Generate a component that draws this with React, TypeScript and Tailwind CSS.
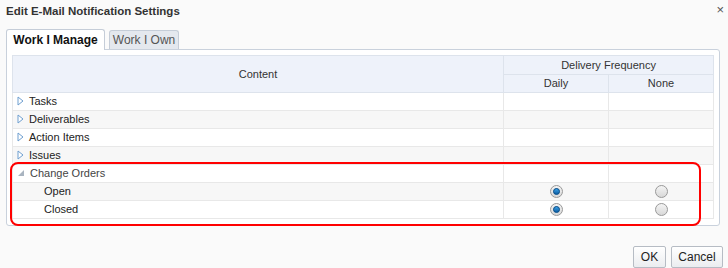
import React from 'react';

type Row = { label: string; level: 0 | 1; state?: 'collapsed' | 'expanded'; daily?: boolean };

const rows: Row[] = [
  { label: 'Tasks', level: 0, state: 'collapsed' },
  { label: 'Deliverables', level: 0, state: 'collapsed' },
  { label: 'Action Items', level: 0, state: 'collapsed' },
  { label: 'Issues', level: 0, state: 'collapsed' },
  { label: 'Change Orders', level: 0, state: 'expanded' },
  { label: 'Open', level: 1, daily: true },
  { label: 'Closed', level: 1, daily: true },
];

function Disclosure({ state }: { state: 'collapsed' | 'expanded' }) {
  if (state === 'expanded') {
    return (
      <svg width="8" height="8" viewBox="0 0 8 8" className="shrink-0">
        <path d="M7 1 L7 7 L1 7 Z" fill="#a9b4c0" />
      </svg>
    );
  }
  return (
    <svg width="7" height="10" viewBox="0 0 7 10" className="shrink-0">
      <path d="M1 1 L6 5 L1 9 Z" fill="#fff" stroke="#6f9fd0" strokeWidth="1" />
    </svg>
  );
}

function Radio({ checked }: { checked: boolean }) {
  return (
    <span className="inline-flex h-[13px] w-[13px] items-center justify-center rounded-full border border-[#9a9a9a] bg-gradient-to-b from-[#f4f4f4] to-[#d8d8d8]">
      {checked && (
        <span className="h-[7px] w-[7px] rounded-full border border-[#0b4d86] bg-gradient-to-b from-[#3aa0e6] to-[#0a5fa5]" />
      )}
    </span>
  );
}

export default function App() {
  return (
    <div className="relative h-[268px] w-[728px] overflow-hidden bg-[#fafafa] text-[11px] text-[#333] [font-family:'Liberation_Sans',Arial,sans-serif]">
      <div className="flex h-[22px] items-start justify-between pl-[6px] pr-[4px] pt-[3px]">
        <h1 className="text-[11.5px] font-bold text-[#333]">Edit E-Mail Notification Settings</h1>
        <span className="text-[13px] leading-none text-[#555]">×</span>
      </div>

      <div className="ml-[6px] mt-[7px] flex items-end gap-[4px]">
        <div className="relative z-10 -mb-px flex h-[21px] w-[99px] items-center justify-center rounded-t-[3px] border border-b-0 border-[#c5cdd8] bg-white text-[12px] font-bold text-[#111]">
          Work I Manage
        </div>
        <div className="flex h-[19px] w-[70px] items-center justify-center rounded-t-[3px] border border-b-0 border-[#c5cdd8] bg-[#e4e8ee] text-[12px] text-[#555]">
          Work I Own
        </div>
      </div>

      <div className="relative ml-[6px] h-[177px] w-[714px] rounded-b-[3px] rounded-tr-[3px] border border-[#c9d1dc] bg-white pl-[5px] pt-[5px]">
        <table className="w-[701px] table-fixed border-collapse">
          <colgroup>
            <col className="w-[491px]" />
            <col className="w-[105px]" />
            <col className="w-[105px]" />
          </colgroup>
          <thead>
            <tr className="h-[19px]">
              <th rowSpan={2} className="border border-[#dde3ec] bg-[#eef2fa] font-normal text-[#333]">
                Content
              </th>
              <th colSpan={2} className="border border-[#dde3ec] bg-[#eef2fa] font-normal text-[#333]">
                Delivery Frequency
              </th>
            </tr>
            <tr className="h-[17px]">
              <th className="border border-[#dde3ec] bg-[#eef2fa] font-normal text-[#333]">Daily</th>
              <th className="border border-[#dde3ec] bg-[#eef2fa] font-normal text-[#333]">None</th>
            </tr>
          </thead>
          <tbody>
            {rows.map((r, i) => (
              <tr key={r.label} className={i % 2 === 1 ? 'h-[18px] bg-[#f7f7f7]' : 'h-[18px] bg-white'}>
                <td className="border border-[#e8e8e8] p-0">
                  <div className={r.level === 0 ? 'flex items-center gap-[5px] pl-[4px] text-[#222]' : 'flex items-center pl-[31px] text-[#222]'}>
                    {r.state && <Disclosure state={r.state} />}
                    <span className={r.state === 'expanded' ? 'text-[#444]' : ''}>{r.label}</span>
                  </div>
                </td>
                <td className="border border-[#e8e8e8] p-0 text-center">
                  {r.level === 1 && <div className="flex items-center justify-center"><Radio checked={!!r.daily} /></div>}
                </td>
                <td className="border border-[#e8e8e8] p-0 text-center">
                  {r.level === 1 && <div className="flex items-center justify-center"><Radio checked={!r.daily} /></div>}
                </td>
              </tr>
            ))}
          </tbody>
        </table>

        <div className="pointer-events-none absolute left-[3px] top-[112px] h-[64px] w-[691px] rounded-[8px] border-2 border-[#ff0000]" />
      </div>

      <div className="mt-[20px] flex justify-end gap-[5px] pr-[5px]">
        <button className="h-[22px] w-[33px] rounded-[2px] border border-[#b6bcc4] bg-gradient-to-b from-white to-[#ebedf0] text-[12px] text-[#222]">
          OK
        </button>
        <button className="h-[22px] w-[52px] rounded-[2px] border border-[#b6bcc4] bg-gradient-to-b from-white to-[#ebedf0] text-[12px] text-[#222]">
          Cancel
        </button>
      </div>
    </div>
  );
}
